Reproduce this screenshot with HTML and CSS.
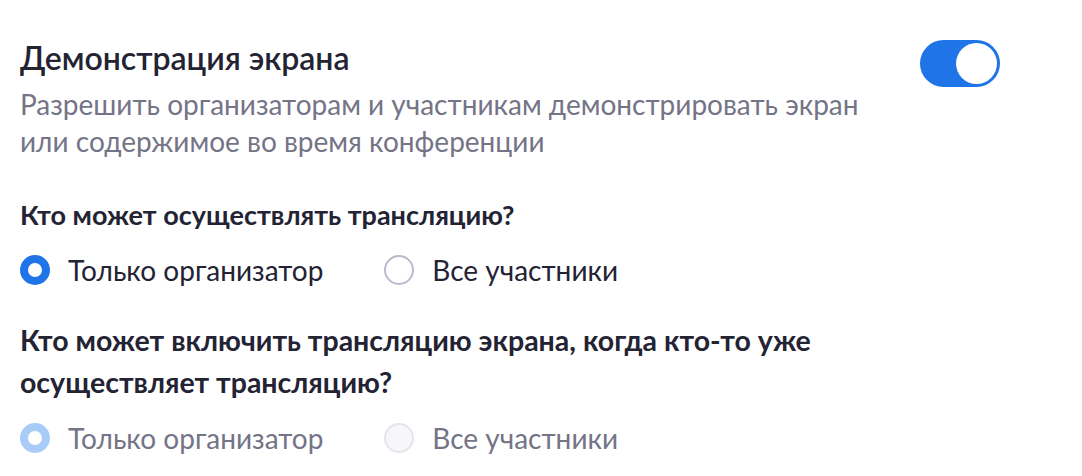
FILE: index.html
```html
<!DOCTYPE html>
<html lang="ru">
<head>
<meta charset="utf-8">
<link rel="stylesheet" href="styles.css">
</head>
<body>
<div class="panel">
  <div class="header">
    <div class="header-text">
      <div class="title">Демонстрация экрана</div>
      <div class="desc">Разрешить организаторам и участникам демонстрировать экран или содержимое во время конференции</div>
    </div>
    <div class="toggle"><span class="knob"></span></div>
  </div>

  <div class="question">Кто может осуществлять трансляцию?</div>
  <div class="radios">
    <label class="radio"><span class="dot checked"></span><span class="label">Только организатор</span></label>
    <label class="radio"><span class="dot"></span><span class="label">Все участники</span></label>
  </div>

  <div class="question q2">Кто может включить трансляцию экрана, когда кто-то уже осуществляет трансляцию?</div>
  <div class="radios r2 disabled">
    <label class="radio"><span class="dot checked"></span><span class="label">Только организатор</span></label>
    <label class="radio"><span class="dot"></span><span class="label">Все участники</span></label>
  </div>
</div>
</body>
</html>
```

FILE: styles.css
```css
html, body {
  margin: 0;
  padding: 0;
  background: #ffffff;
}
body {
  font-family: Lato, "Noto Sans", sans-serif;
  color: #232333;
}
.panel {
  width: 980px;
  padding: 40px 82px 0 20px;
}
.header {
  display: flex;
  justify-content: space-between;
  align-items: flex-start;
}
.header-text {
  width: 860px;
}
.title {
  font-size: 32px;
  font-weight: 600;
  line-height: 36px;
  color: #232333;
}
.desc {
  margin-top: 10px;
  font-size: 28px;
  line-height: 37px;
  color: #747487;
}
.toggle {
  width: 80px;
  height: 47px;
  border-radius: 24px;
  background: #1f74e8;
  display: flex;
  align-items: center;
  justify-content: flex-end;
  padding: 0 3px;
  box-sizing: border-box;
}
.knob {
  width: 41px;
  height: 41px;
  border-radius: 50%;
  background: #ffffff;
}
.question {
  margin-top: 34px;
  font-size: 27px;
  font-weight: 700;
  line-height: 42px;
  color: #232333;
  width: 840px;
}
.radios {
  display: flex;
  gap: 61px;
  margin-top: 17px;
}
.radio {
  display: flex;
  align-items: center;
  gap: 18px;
  font-size: 28px;
  line-height: 34px;
  color: #232333;
}
.dot {
  width: 30px;
  height: 30px;
  border-radius: 50%;
  box-sizing: border-box;
  border: 2px solid #babacc;
  background: #fff;
}
.dot.checked {
  border: 8px solid #1f74e8;
}
.q2 {
  margin-top: 32px;
  font-size: 28.5px;
}
.r2 {
  margin-top: 18px;
}
.disabled .label {
  color: #747487;
}
.disabled .dot {
  border-color: #e4e4ed;
  background: #f7f7fa;
}
.disabled .dot.checked {
  border-color: #a8cbf7;
  background: #fff;
}
```
